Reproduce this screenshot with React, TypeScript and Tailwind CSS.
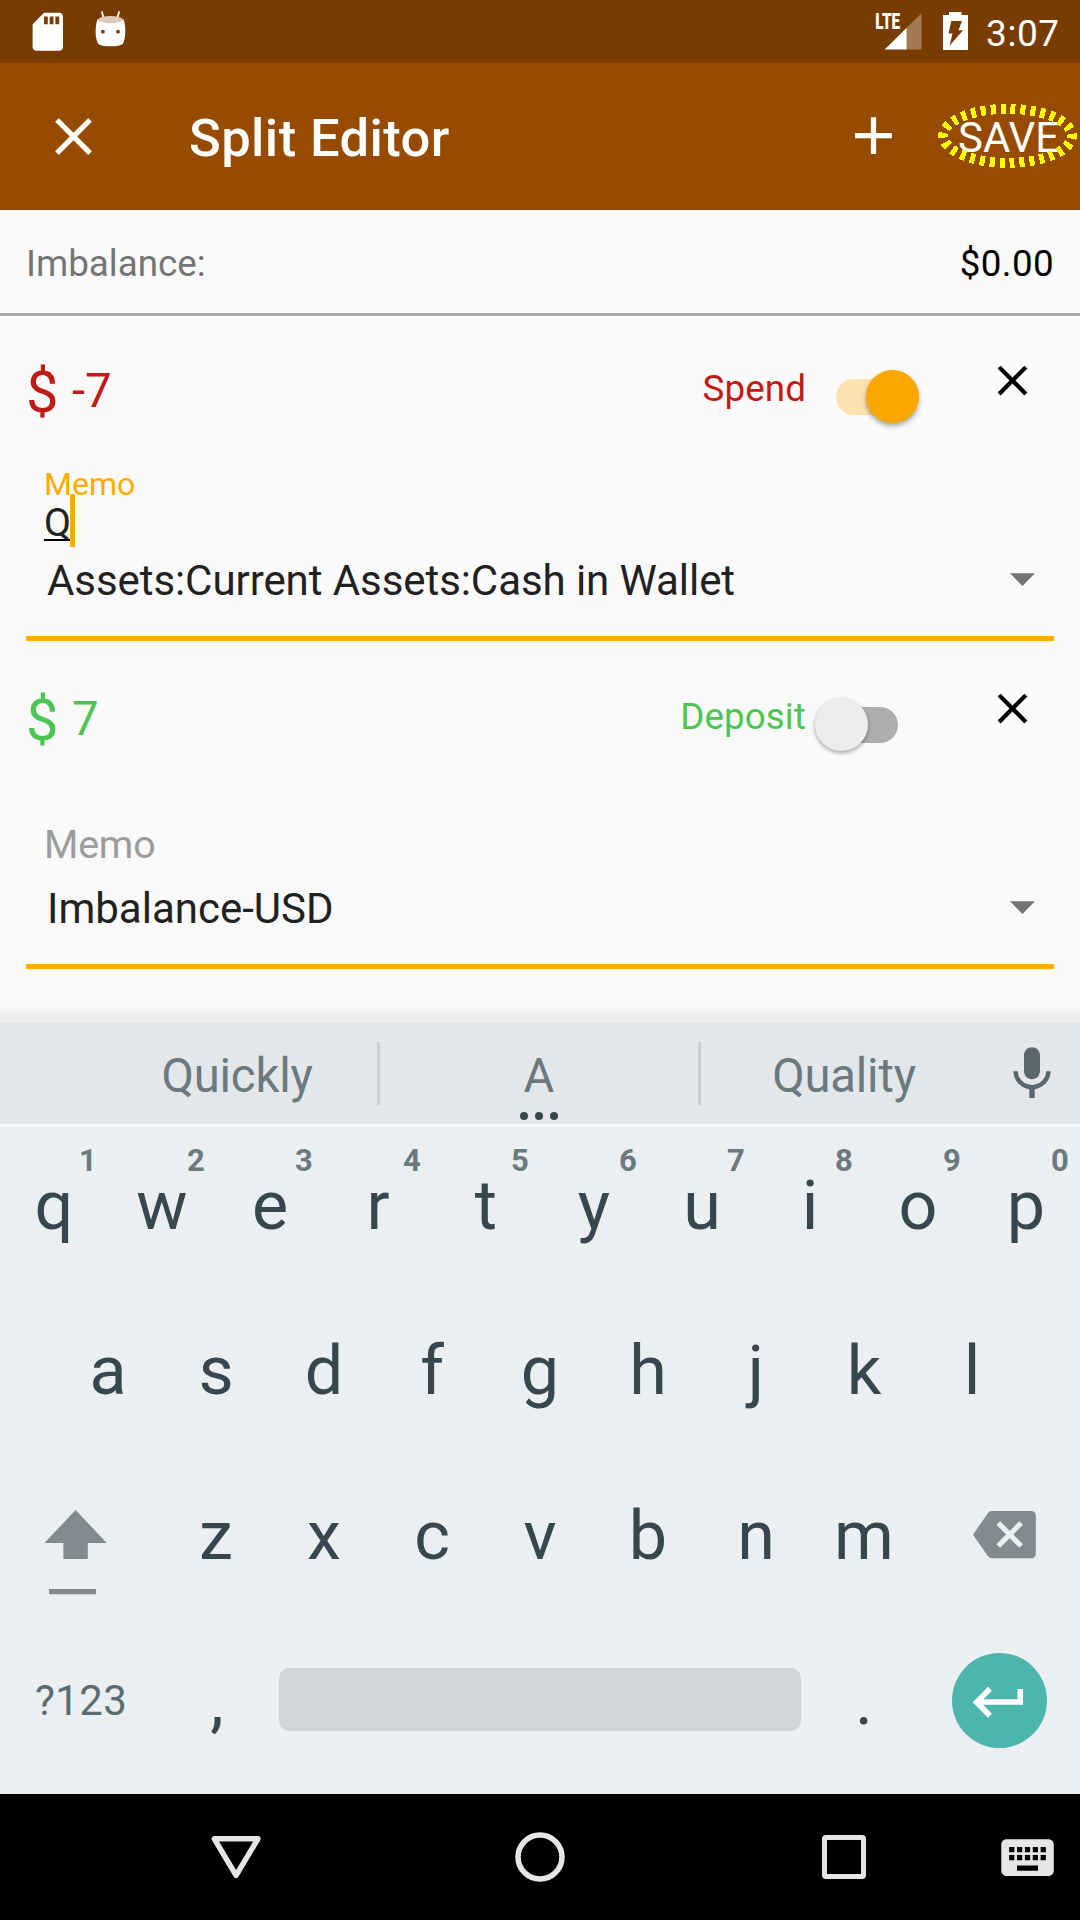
import React from "react";

const CLOSE_PATH =
  "M19 6.41L17.59 5 12 10.59 6.41 5 5 6.41 10.59 12 5 17.59 6.41 19 12 13.41 17.59 19 19 17.59 13.41 12z";

function StatusBar() {
  return (
    <div className="flex h-[63px] items-start bg-[#783c00] text-white">
      <svg className="mt-[9px] ml-[25px] h-[45.6px] w-[45.6px]" viewBox="0 0 24 24" fill="white">
        <path d="M18 2h-8L4.02 8 4 20c0 1.1.9 2 2 2h12c1.1 0 2-.9 2-2V4c0-1.1-.9-2-2-2zm-6 6h-2V4h2v4zm3 0h-2V4h2v4zm3 0h-2V4h2v4z" />
      </svg>
      <svg className="mt-[9px] ml-[19.4px] h-[42px] w-[40px]" viewBox="90 9 40 42">
        <path d="M102 12l2 8M119 12l-2 8" stroke="white" strokeWidth="1.8" strokeLinecap="round" />
        <path
          fill="white"
          fillRule="evenodd"
          d="M97.500 19C95 27 94.800 37 98 43.500C101 47.300 120 47.300 123 43.500C126.200 37 126 27 123.500 19C119 24 102 24 97.500 19zM102.900 29.800a1.900 1.900 0 1 0 0 3.800a1.900 1.900 0 0 0 0-3.800zM118 29.800a1.900 1.900 0 1 0 0 3.800a1.900 1.900 0 0 0 0-3.800z"
        />
        <ellipse cx="110.500" cy="19.600" rx="12.400" ry="3.500" fill="#dccbbb" />
      </svg>
      <div className="flex-1" />
      <svg className="mt-[10px] h-[42px] w-[50px]" viewBox="874 10 50 42">
        <text
          x="875.200"
          y="29"
          fill="white"
          fontSize="22"
          fontWeight="900"
          textLength="25"
          lengthAdjust="spacingAndGlyphs"
        >
          LTE
        </text>
        <path d="M921.500 13.300V49.400H906.700V27.800z" fill="#a27950" />
        <path d="M906.700 27.800V49.400H884.700z" fill="white" />
      </svg>
      <svg className="mt-[10px] ml-[17px] h-[42px] w-[29px]" viewBox="941 10 29 42">
        <path
          fill="white"
          fillRule="evenodd"
          d="M949 12h12.500v3H968v35H943V15h6zM951.300 21L948.500 33.500H952.500L949.500 45.700L963 30.200H958.500L962 21z"
        />
      </svg>
      <span className="mt-[12px] mr-[21px] ml-[16px] w-[73px] text-[37px] leading-[44px] tracking-[0.6px] whitespace-nowrap">
        3:07
      </span>
    </div>
  );
}

function AppBar() {
  return (
    <div className="relative flex h-[147px] items-start bg-[#964b00] text-white">
      <svg className="mt-[42px] ml-[42px] h-[63px] w-[63px]" viewBox="0 0 24 24" fill="white">
        <path d={CLOSE_PATH} />
      </svg>
      <h1 className="mt-[43px] ml-[84px] flex-1 text-[52.5px] leading-[64px] font-medium tracking-[0.4px]">Split Editor</h1>
      <svg className="mt-[41px] h-[63px] w-[63px]" viewBox="0 0 24 24" fill="white">
        <path d="M19 13h-6v6h-2v-6H5v-2h6V5h2v6h6v2z" />
      </svg>
      <span className="mt-[50px] mr-[20px] ml-[53px] w-[102px] text-[42px] leading-[50px]">SAVE</span>
      <svg className="absolute top-[37px] right-0 h-[72px] w-[146px]" viewBox="934 100 146 72">
        <ellipse
          cx="1007.600"
          cy="135.800"
          rx="64.300"
          ry="27"
          fill="none"
          stroke="#ffff00"
          strokeWidth="10"
          pathLength="300"
          strokeDasharray="5 5"
          strokeDashoffset="2"
          shapeRendering="crispEdges"
        />
      </svg>
    </div>
  );
}

type Split = {
  amount: string;
  kind: string;
  on: boolean;
  memo: string;
  account: string;
};

const SPLITS: Split[] = [
  { amount: "-7", kind: "Spend", on: true, memo: "Q", account: "Assets:Current Assets:Cash in Wallet" },
  { amount: "7", kind: "Deposit", on: false, memo: "", account: "Imbalance-USD" },
];

function Toggle({ on }: { on: boolean }) {
  return (
    <div className="relative mt-[54px] ml-[9px] flex h-[53px] w-[104px] items-center justify-center">
      <div className={on ? "h-9 w-[62px] rounded-full bg-[#fde2b0]" : "h-9 w-[62px] rounded-full bg-[#aeaeae]"} />
      <div
        className={
          on
            ? "absolute top-0 right-0 size-[53px] rounded-full bg-[#fba700] shadow-[0_3px_5px_rgba(0,0,0,0.35)]"
            : "absolute top-0 left-0 size-[53px] rounded-full bg-[#ececec] shadow-[0_2px_4px_rgba(0,0,0,0.35)]"
        }
      />
    </div>
  );
}

function SplitRow({ split }: { split: Split }) {
  return (
    <div className="h-[328px] px-[26px]">
      <div className={split.on ? "flex h-[150px] items-start text-[#c11b17]" : "flex h-[150px] items-start text-[#4cc552]"}>
        <span className="mt-[46px] w-[46px] text-[57.75px] leading-[60px]">$</span>
        <span className="mt-[47px] flex-1 text-[47.25px] leading-[56px]">{split.amount}</span>
        <span className="mt-[51px] text-[36.75px] leading-[44px] tracking-[0.1px]">{split.kind}</span>
        <Toggle on={split.on} />
        <svg className="mt-[39px] mr-[16px] ml-[68px] size-[51px]" viewBox="0 0 24 24" fill="black">
          <path d={CLOSE_PATH} />
        </svg>
      </div>
      <div className="h-[28px] pl-[18px] text-[32px] leading-[36px] text-[#ffab00]">{split.memo && "Memo"}</div>
      <div className="flex h-[53px] pl-[18px] text-[39.375px]">
        {split.memo ? (
          <>
            <span className="relative w-[26px] leading-[57px] text-[#212121]">
              {split.memo}
              <span className="absolute top-[45px] left-0 h-[2px] w-[27px] bg-black" />
            </span>
            <span className="relative h-[53px] w-[5px] bg-[#ffab00]" />
          </>
        ) : (
          <span className="leading-[46px] tracking-[-0.2px] text-[#9c9c9c]">Memo</span>
        )}
      </div>
      <div className="flex h-[89px] items-start justify-between pt-[6px] pr-[19px] pl-[21px]">
        <span
          className={
            split.on
              ? "text-[42px] leading-[56px] tracking-[-0.07px] text-[#212121]"
              : "text-[42px] leading-[56px] text-[#212121]"
          }
        >
          {split.account}
        </span>
        <svg className="mt-[20px] h-[13px] w-[25px]" viewBox="0 0 25 13" fill="#737373">
          <path d="M0 0.300h25l-12.500 12.700z" />
        </svg>
      </div>
      <div className="h-[5px] bg-[#ffab00]" />
    </div>
  );
}

function Suggestions() {
  return (
    <div className="flex h-[102px] items-start bg-[#e3e7ea] text-[47.25px] leading-[56px] text-[#6c797f]">
      <span className="mt-[26px] ml-[97px] w-[280px] text-center tracking-[-0.2px]">Quickly</span>
      <span className="mt-[20px] h-[63px] w-[3px] bg-[#c9ced1]" />
      <div className="mt-[26px] flex w-[318px] flex-col items-center">
        <span>A</span>
        <span className="mt-[8px] flex gap-[7px]">
          <span className="size-2 rounded-full bg-[#37474f]" />
          <span className="size-2 rounded-full bg-[#37474f]" />
          <span className="size-2 rounded-full bg-[#37474f]" />
        </span>
      </div>
      <span className="mt-[20px] h-[63px] w-[3px] bg-[#c9ced1]" />
      <span className="mt-[26px] ml-px w-[284px] text-center tracking-[-0.2px]">Quality</span>
      <svg className="mt-[20px] ml-[14px] size-[64px]" viewBox="0 0 24 24" fill="#5a676e">
        <path d="M12 14c1.660 0 2.990-1.340 2.990-3L15 5c0-1.660-1.340-3-3-3S9 3.340 9 5v6c0 1.660 1.340 3 3 3zm5.300-3c0 3-2.540 5.100-5.300 5.100S6.700 14 6.700 11H5c0 3.410 2.720 6.230 6 6.720V21h2v-3.280c3.280-.48 6-3.300 6-6.720h-1.700z" />
      </svg>
    </div>
  );
}

function Key({ label, hint }: { label: string; hint?: string }) {
  return (
    <span className="relative w-[108px] text-center">
      {label}
      {hint && (
        <span className="absolute top-[-23px] right-0 w-10 text-center text-[31px] leading-[36px] font-bold text-[#6c7a80]">
          {hint}
        </span>
      )}
    </span>
  );
}

function Keyboard() {
  return (
    <div className="flex h-[667px] flex-col bg-[#ebeff2] pt-[39px] text-[68.25px] leading-[80px] text-[#37474f]">
      <div className="flex h-[165px]">
        {"qwertyuiop".split("").map((k, i) => (
          <Key key={k} label={k} hint={String((i + 1) % 10)} />
        ))}
      </div>
      <div className="flex h-[165px] justify-center">
        {"asdfghjkl".split("").map((k) => (
          <Key key={k} label={k} />
        ))}
      </div>
      <div className="flex h-[165px]">
        <svg className="-mt-[13px] ml-[44px] h-[112px] w-[64px]" viewBox="44 1483 64 112" fill="#828c90">
          <path d="M75.600 1510L106.800 1543H87.800V1559H63.400V1543H44.400z" />
          <path d="M49 1589h47v5.300H49z" />
        </svg>
        <div className="ml-[54px] flex">
          {"zxcvbnm".split("").map((k) => (
            <Key key={k} label={k} />
          ))}
        </div>
        <svg className="mt-[14px] ml-[54px] h-[49px] w-[64px]" viewBox="972 1510 64 49">
          <path
            d="M991.500 1511H1031.500a4.300 4.300 0 0 1 4.300 4.300V1554a4.300 4.300 0 0 1-4.300 4.300H991.500q-2 0-3.500-2L973 1534.700L988 1513q1.500-2 3.500-2z"
            fill="#828c90"
          />
          <path d="M998.300 1523L1021.100 1546M1021.100 1523L998.300 1546" stroke="#ebeff2" strokeWidth="5.200" />
        </svg>
      </div>
      <div className="flex flex-1 items-start">
        <span className="mt-[15px] ml-[35px] w-[128px] text-[42px] leading-[50px] tracking-[0.4px] text-[#5b6b72]">?123</span>
        <Key label="," />
        <span className="mt-[7px] ml-[8px] h-[63px] w-[522px] rounded-[10px] bg-[#d1d6d9]" />
        <span className="ml-[9px] w-[108px] text-center">.</span>
        <span className="-mt-[8px] ml-[33.5px] flex size-[95px] items-center justify-center rounded-full bg-[#4db6ac]">
          <svg className="size-[95px]" viewBox="951.500 1653 95 95" fill="none" stroke="white" strokeWidth="5.500">
            <path d="M1019.800 1689V1702H977" />
            <path d="M989.500 1688.800L976.100 1702.300L989.500 1715.800" />
          </svg>
        </span>
      </div>
    </div>
  );
}

function NavBar() {
  return (
    <div className="flex h-[126px] items-center bg-black">
      <svg className="ml-[209px] h-[54px] w-[54px]" viewBox="209 1830 54 54" fill="none" stroke="#e6e6e6" strokeWidth="5.500" strokeLinejoin="round">
        <path d="M214.300 1838.800H257.900L236.100 1875.300z" />
      </svg>
      <svg className="ml-[250px] h-[54px] w-[54px]" viewBox="513 1830 54 54" fill="none" stroke="#e6e6e6" strokeWidth="5.500">
        <circle cx="540" cy="1857" r="22" />
      </svg>
      <svg className="ml-[250px] h-[54px] w-[54px]" viewBox="817 1830 54 54" fill="none" stroke="#e6e6e6" strokeWidth="5">
        <rect x="824.500" y="1837.500" width="39" height="39" rx="1.500" />
      </svg>
      <svg className="mt-px ml-[125px] size-[63px]" viewBox="0 0 24 24" fill="#e6e6e6">
        <path d="M20 5H4c-1.100 0-1.990.9-1.990 2L2 17c0 1.100.9 2 2 2h16c1.100 0 2-.9 2-2V7c0-1.100-.9-2-2-2zm-9 3h2v2h-2V8zm0 3h2v2h-2v-2zM8 8h2v2H8V8zm0 3h2v2H8v-2zm-1 2H5v-2h2v2zm0-3H5V8h2v2zm9 7H8v-2h8v2zm0-4h-2v-2h2v2zm0-3h-2V8h2v2zm3 3h-2v-2h2v2zm0-3h-2V8h2v2z" />
      </svg>
    </div>
  );
}

export default function App() {
  return (
    <div className="flex h-[1920px] w-[1080px] flex-col overflow-hidden bg-[#fafafa] font-['Roboto',sans-serif]">
      <StatusBar />
      <AppBar />
      <div className="flex h-[106px] items-start justify-between border-b-[3px] border-[#aaaaaa] px-[26px] pt-[32px] text-[36.75px] leading-[44px]">
        <span className="text-[#757575]">Imbalance:</span>
        <span className="tracking-[0.4px] text-black">$0.00</span>
      </div>
      {SPLITS.map((s) => (
        <SplitRow key={s.kind} split={s} />
      ))}
      <div className="h-[34px]" />
      <div className="h-[13px] bg-linear-to-b from-[#fafafa] to-[#e9eaea]" />
      <div className="h-[3px] bg-[#eceef0]" />
      <Suggestions />
      <div className="h-[3px] bg-[#f5f8fa]" />
      <Keyboard />
      <NavBar />
    </div>
  );
}
